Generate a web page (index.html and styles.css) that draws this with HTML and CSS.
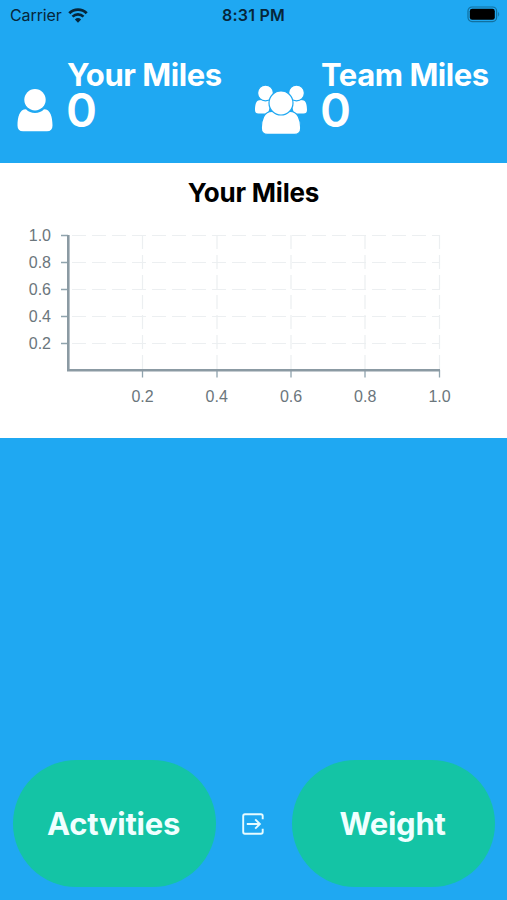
FILE: index.html
```html
<!DOCTYPE html>
<html lang="en">
<head>
    <meta charset="UTF-8">
    <meta name="viewport" content="width=device-width, initial-scale=1.0">
    <title>Your Miles</title>
    <link rel="stylesheet" href="styles.css">
</head>
<body>
    <div class="screen">
        <div class="status-bar">
            <div class="carrier">
                <span>Carrier</span>
                <svg class="wifi" width="20" height="15" viewBox="0 0 20 15">
                    <path d="M1.3 5.2a12.4 12.4 0 0 1 17.4 0" fill="none" stroke="#06263a" stroke-width="2.9"/>
                    <path d="M4.5 8.6a7.9 7.9 0 0 1 11 0" fill="none" stroke="#06263a" stroke-width="2.6"/>
                    <path d="M10 14.7L6.9 11.5a4.5 4.5 0 0 1 6.2 0z" fill="#06263a"/>
                </svg>
            </div>
            <span class="clock">8:31 PM</span>
            <svg class="battery" width="34" height="17" viewBox="0 0 34 17">
                <rect x="1" y="1" width="28.6" height="14.6" rx="4" fill="none" stroke="#12709f" stroke-width="1.2"/>
                <rect x="2.8" y="2.8" width="25" height="11" rx="2.4" fill="#000"/>
                <path d="M31.2 5.8q2 2.5 0 5z" fill="#12709f"/>
            </svg>
        </div>

        <header class="totals">
            <div class="total">
                <svg class="person" width="36" height="43" viewBox="0 0 36 43">
                    <path d="M9 20.2C2.5 20.2 0.5 28 0.5 36.5q0 5.8 5.5 5.8h24q5.5 0 5.5-5.8C35.5 28 33.5 20.2 27 20.2a12.5 12.5 0 0 1-18 0z" fill="#fff"/>
                    <circle cx="18" cy="10.8" r="10.7" fill="#fff"/>
                </svg>
                <div class="total-text">
                    <h2>Your Miles</h2>
                    <p>0</p>
                </div>
            </div>
            <div class="total team">
                <svg class="people" width="54" height="50" viewBox="0 0 54 50">
                    <g fill="#fff">
                        <path d="M5.5 15.2C2 15.2 1 20 1 25q0 3.6 3.5 3.6H14L18 14z"/>
                        <path d="M48.5 15.2C52 15.2 53 20 53 25q0 3.6-3.5 3.6H40L36 14z"/>
                    </g>
                    <g fill="#fff" stroke="#1fa8f2" stroke-width="1.2">
                        <circle cx="11.5" cy="8" r="7.9"/>
                        <circle cx="42.500" cy="8" r="7.9"/>
                        <path d="M18 26.3C10 26.3 7.3 35 7.3 43q0 6.4 6.2 6.4h27q6.2 0 6.2-6.4c0-8-2.7-16.7-10.7-16.7z"/>
                        <circle cx="27" cy="18" r="12"/>
                    </g>
                </svg>
                <div class="total-text">
                    <h2>Team Miles</h2>
                    <p>0</p>
                </div>
            </div>
        </header>

        <section class="chart">
            <h3>Your Miles</h3>
            <svg class="plot" width="507" height="225" viewBox="0 213 507 225">
                <g class="grid">
                    <path d="M72 235.5H440M72 262.5H440M72 289.5H440M72 316.5H440M72 343.5H440"/>
                    <path d="M142.5 235V370M217 235V370M291 235V370M365 235V370M439.5 235V370"/>
                </g>
                <g class="ticks">
                    <path d="M61 235.5H68M61 262.5H68M61 289.5H68M61 316.5H68M61 343.5H68"/>
                    <path d="M142.5 370V377.5M217 370V377.5M291 370V377.5M365 370V377.5M439.5 370V377.5"/>
                </g>
                <path class="axis" d="M68.3 235V370.2H440"/>
                <g class="labels y-labels">
                    <text x="51" y="241.2">1.0</text>
                    <text x="51" y="268.2">0.8</text>
                    <text x="51" y="295.2">0.6</text>
                    <text x="51" y="322.2">0.4</text>
                    <text x="51" y="349.2">0.2</text>
                </g>
                <g class="labels x-labels">
                    <text x="142.5" y="402">0.2</text>
                    <text x="216.7" y="402">0.4</text>
                    <text x="291" y="402">0.6</text>
                    <text x="365.2" y="402">0.8</text>
                    <text x="439.5" y="402">1.0</text>
                </g>
            </svg>
        </section>

        <footer class="actions">
            <button type="button">Actvities</button>
            <svg class="exit" width="22" height="22" viewBox="0 0 22 22">
                <path d="M20.7 6.2V3q0-1.7-1.7-1.7H2.9q-1.7 0-1.7 1.7V19q0 1.7 1.7 1.7H19q1.7 0 1.7-1.7V15.8M4.8 11H17.5M13.2 6.3L17.9 11L13.2 15.7" fill="none" stroke="#e6fbff" stroke-width="1.9"/>
            </svg>
            <button type="button">Weight</button>
        </footer>
    </div>
</body>
</html>
```

FILE: styles.css
```css
body {
    margin: 0;
    font-family: Inter, "Liberation Sans", sans-serif;
    background-color: #1fa8f2;
}

h2, h3, p {
    margin: 0;
}

svg {
    display: block;
}

.screen {
    display: flex;
    flex-direction: column;
    width: 507px;
    height: 900px;
    overflow: hidden;
}

.status-bar {
    display: grid;
    grid-template-columns: 1fr auto 1fr;
    align-items: center;
    height: 30px;
    padding: 0 7px 0 10px;
    box-sizing: border-box;
    color: #06263a;
    font-size: 16px;
}

.carrier {
    display: flex;
    align-items: center;
    gap: 6px;
    letter-spacing: -0.1px;
}

.clock {
    margin-right: 3px;
    font-weight: 600;
    letter-spacing: 0.2px;
}

.battery {
    justify-self: end;
    margin: 0 -1px 2px 0;
}

.totals {
    display: grid;
    grid-template-columns: 255px 252px;
    height: 133px;
    color: #fff;
}

.total {
    display: flex;
    align-items: flex-start;
    padding-left: 17px;
}

.team {
    padding-left: 0;
}

.person {
    margin: 59px 14px 0 0;
}

.people {
    margin: 55px 13px 0 -1px;
}

.total-text {
    padding-top: 26px;
    white-space: nowrap;
}

.total-text h2 {
    font-size: 31px;
    font-weight: 700;
    line-height: 37px;
    letter-spacing: -0.45px;
}

.total-text p {
    margin-left: -1px;
    font-size: 47px;
    font-weight: 600;
    line-height: 34px;
}

.chart {
    height: 274.5px;
    background-color: #fff;
}

.chart h3 {
    padding-top: 14px;
    font-size: 26px;
    font-weight: 700;
    line-height: 32px;
    letter-spacing: -0.2px;
    text-align: center;
    color: #000;
}

.plot {
    margin-top: 4px;
}

.grid {
    fill: none;
    stroke: #eceff1;
    stroke-width: 1.2;
    stroke-dasharray: 14 6;
}

.ticks {
    stroke: #90a4ae;
    stroke-width: 1.3;
}

.axis {
    fill: none;
    stroke: #8b9aa3;
    stroke-width: 2.6;
}

.labels {
    font-family: "Liberation Sans", Arial, sans-serif;
    font-size: 16px;
    fill: #6b767c;
}

.y-labels {
    text-anchor: end;
}

.x-labels {
    text-anchor: middle;
}

.actions {
    display: flex;
    align-items: center;
    justify-content: space-between;
    margin-top: auto;
    padding: 0 12px 13px 13px;
}

.actions .exit {
    margin-right: 2px;
}

.actions button {
    width: 203px;
    height: 127px;
    padding: 0 2px 0 0;
    border: none;
    border-radius: 64px;
    background-color: #14c4a5;
    color: #f0ffff;
    font-family: inherit;
    font-size: 31px;
    font-weight: 700;
    letter-spacing: -0.25px;
}
```
